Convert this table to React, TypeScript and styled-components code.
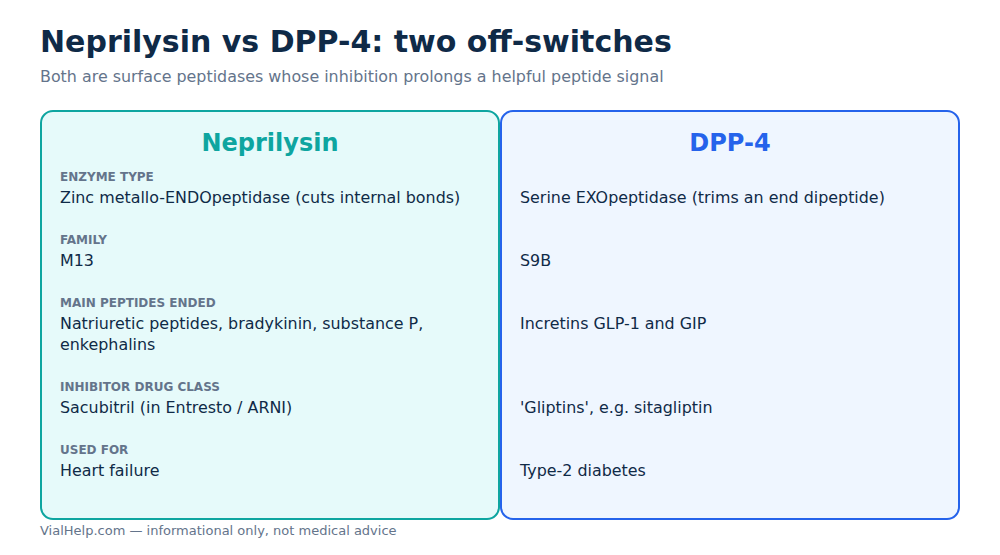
import React from "react";
import styled, { createGlobalStyle } from "styled-components";

const Global = createGlobalStyle`
  html, body { margin: 0; padding: 0; background: #ffffff; }
  body { font-family: "DejaVu Sans", "Noto Sans", sans-serif; }
`;

const Page = styled.div`
  width: 1000px;
  height: 555px;
  box-sizing: border-box;
  padding: 24px 40px 0 40px;
  display: flex;
  flex-direction: column;
`;

const Title = styled.h1`
  margin: 0;
  font-size: 30px;
  line-height: 36px;
  font-weight: 700;
  color: #0f2a47;
`;

const Subtitle = styled.p`
  margin: 7px 0 0 0;
  font-size: 15.9px;
  line-height: 20px;
  color: #64748b;
`;

const Cards = styled.div`
  margin-top: 23px;
  display: grid;
  grid-template-columns: 460px 460px;
  height: 410px;
`;

const Card = styled.section<{ $accent: string; $bg: string }>`
  box-sizing: border-box;
  border: 2px solid ${(p) => p.$accent};
  background: ${(p) => p.$bg};
  border-radius: 13px;
  padding: 15.6px 18px 0 18px;
  display: flex;
  flex-direction: column;
`;

const CardTitle = styled.h2<{ $accent: string }>`
  margin: 0 0 11px 0;
  text-align: center;
  font-size: 24px;
  line-height: 30px;
  font-weight: 700;
  color: ${(p) => p.$accent};
`;

const Rows = styled.div`
  display: flex;
  flex-direction: column;
  gap: 24px;
`;

const Row = styled.div`
  display: flex;
  flex-direction: column;
  gap: 2px;
`;

const Label = styled.div`
  font-size: 12px;
  line-height: 16px;
  height: 16px;
  font-weight: 700;
  text-transform: uppercase;
  color: #64748b;
`;

const Value = styled.div<{ $lines: number }>`
  font-size: 15.9px;
  line-height: 21px;
  min-height: ${(p) => p.$lines * 21}px;
  color: #0f2a47;
`;

const Footer = styled.div`
  margin-top: 3px;
  font-size: 13px;
  line-height: 16px;
  color: #64748b;
`;

type RowData = { label: string; left: string; right: string; lines: number };

const rows: RowData[] = [
  { label: "Enzyme type", left: "Zinc metallo-ENDOpeptidase (cuts internal bonds)", right: "Serine EXOpeptidase (trims an end dipeptide)", lines: 1 },
  { label: "Family", left: "M13", right: "S9B", lines: 1 },
  { label: "Main peptides ended", left: "Natriuretic peptides, bradykinin, substance P, enkephalins", right: "Incretins GLP-1 and GIP", lines: 2 },
  { label: "Inhibitor drug class", left: "Sacubitril (in Entresto / ARNI)", right: "'Gliptins', e.g. sitagliptin", lines: 1 },
  { label: "Used for", left: "Heart failure", right: "Type-2 diabetes", lines: 1 },
];

const cards = [
  { name: "Neprilysin", accent: "#0ea5a0", bg: "#e6fafa", side: "left" as const, showLabels: true },
  { name: "DPP-4", accent: "#2563eb", bg: "#eff6ff", side: "right" as const, showLabels: false },
];

export default function App() {
  return (
    <>
      <Global />
      <Page>
        <Title>Neprilysin vs DPP-4: two off-switches</Title>
        <Subtitle>Both are surface peptidases whose inhibition prolongs a helpful peptide signal</Subtitle>
        <Cards>
          {cards.map((c) => (
            <Card key={c.name} $accent={c.accent} $bg={c.bg}>
              <CardTitle $accent={c.accent}>{c.name}</CardTitle>
              <Rows>
                {rows.map((r) => (
                  <Row key={r.label}>
                    <Label>{c.showLabels ? r.label : ""}</Label>
                    <Value $lines={r.lines}>{r[c.side]}</Value>
                  </Row>
                ))}
              </Rows>
            </Card>
          ))}
        </Cards>
        <Footer>VialHelp.com — informational only, not medical advice</Footer>
      </Page>
    </>
  );
}
